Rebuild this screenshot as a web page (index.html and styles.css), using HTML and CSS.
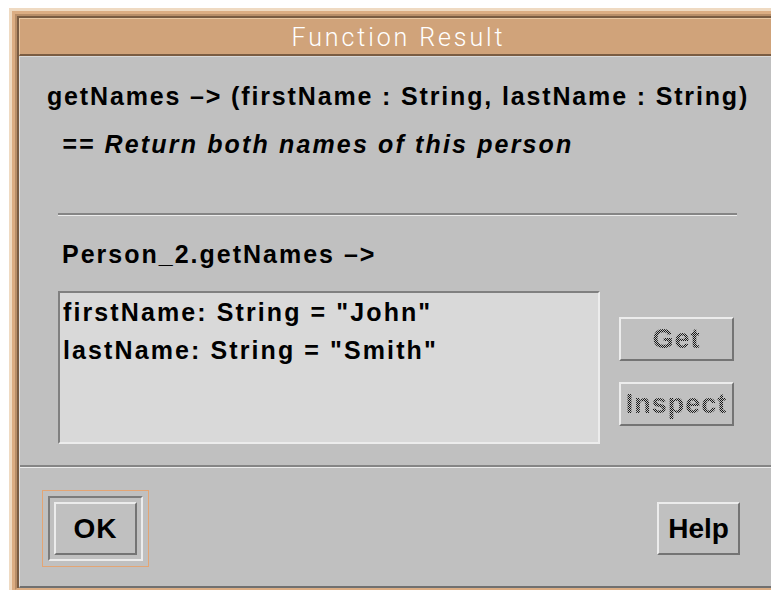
FILE: index.html
```html
<!DOCTYPE html>
<html lang="en">
<head>
<meta charset="utf-8">
<title>Function Result</title>
<link rel="stylesheet" href="styles.css">
</head>
<body>
<div class="frame">
  <div class="frame-tan">
    <div class="frame-mid">
      <div class="frame-inner">
        <div class="titlebar">Function Result</div>
        <div class="panel">
          <div class="signature">getNames –&gt; (firstName : String, lastName : String)</div>
          <div class="comment">== Return both names of this person</div>
          <div class="rule rule-short"></div>
          <div class="call">Person_2.getNames –&gt;</div>
          <div class="result">
            <div class="listbox">
              <div class="item">firstName: String = "John"</div>
              <div class="item">lastName: String = "Smith"</div>
            </div>
            <div class="side-buttons">
              <button class="btn btn-side" disabled><span class="stipple">Get</span></button>
              <button class="btn btn-side" disabled><span class="stipple">Inspect</span></button>
            </div>
          </div>
          <div class="rule rule-full"></div>
          <div class="actions">
            <div class="default-ring">
              <div class="default-well">
                <button class="btn btn-action btn-ok">OK</button>
              </div>
            </div>
            <button class="btn btn-action">Help</button>
          </div>
        </div>
      </div>
    </div>
  </div>
</div>
</body>
</html>
```

FILE: styles.css
```css
html, body {
  margin: 0;
  padding: 0;
  width: 771px;
  height: 590px;
  overflow: hidden;
  background: #ffffff;
}

/* window frame: layered tan bevels */
.frame {
  margin: 8px 0 0 9px;
  width: 780px;
  border: 3px solid #efdac2;
  border-right: none;
  border-bottom: none;
}
.frame-tan {
  border: 3px solid #dbad83;
  border-right: none;
}
.frame-mid {
  border: 2px solid #b88e68;
  border-right: none;
  border-bottom-color: #dbad83;
}
.frame-inner {
  width: 758px;
  border-top: 2px solid #7a5c42;
  border-left: 2px solid #7a5c42;
}

.titlebar {
  height: 35px;
  line-height: 38px;
  background: #d0a37a;
  border-top: 1px solid #e8c7a2;
  border-left: 1px solid #e8c7a2;
  border-bottom: 2px solid #7a5c42;
  color: #ffffff;
  text-align: center;
  font-family: Roboto, "DejaVu Sans", sans-serif;
  font-weight: 300;
  font-size: 25px;
  letter-spacing: 2.9px;
}

.panel {
  background: #c0c0c0;
  border-top: 1px solid #d9d9d9;
  border-left: 1px solid #e0e0e0;
  border-bottom: 2px solid #707070;
  font-family: "Liberation Sans", Arial, sans-serif;
  font-weight: bold;
  font-size: 25px;
  letter-spacing: 2px;
  color: #000000;
  display: flex;
  flex-direction: column;
}

.signature {
  margin: 24px 0 0 27px;
  line-height: 30px;
  letter-spacing: 1.85px;
  white-space: nowrap;
}
.comment {
  margin: 18px 0 0 42px;
  line-height: 30px;
  font-style: italic;
  letter-spacing: 2.15px;
}

/* etched separators */
.rule {
  height: 2px;
  background: #858585;
  border-bottom: 1px solid #ececec;
}
.rule-short {
  margin: 54px 0 0 38px;
  width: 679px;
}
.rule-full {
  margin-top: 21px;
}

.call {
  margin: 23px 0 0 42px;
  line-height: 30px;
}

.result {
  margin: 22px 0 0 38px;
  display: flex;
  gap: 19px;
}
.listbox {
  box-sizing: border-box;
  width: 542px;
  height: 153px;
  background: #d9d9d9;
  border: 2px solid;
  border-color: #808080 #ececec #ececec #808080;
  padding: 0 3px;
  line-height: 38px;
  letter-spacing: 2.1px;
  white-space: nowrap;
}
.side-buttons {
  padding-top: 26px;
  display: flex;
  flex-direction: column;
  gap: 21px;
}

.btn {
  box-sizing: border-box;
  margin: 0;
  padding: 0;
  background: #c0c0c0;
  border: 2px solid;
  border-color: #ececec #747474 #747474 #ececec;
  color: #000000;
  font-family: "Liberation Sans", Arial, sans-serif;
  font-weight: bold;
  font-size: 28px;
  letter-spacing: 0;
}
.btn-side {
  width: 115px;
  height: 44px;
  font-size: 27px;
  letter-spacing: 1px;
}
/* insensitive label drawn with a 50% stipple */
.stipple {
  color: transparent;
  background-image: repeating-conic-gradient(#161616 0 25%, transparent 0 50%);
  background-size: 2px 2px;
  -webkit-background-clip: text;
  background-clip: text;
}

.actions {
  margin: 22px 0 19px 22px;
  width: 698px;
  display: flex;
  justify-content: space-between;
  align-items: center;
}
.default-ring {
  border: 1px solid #e3a574;
  padding: 5px;
}
.default-well {
  border: 2px solid;
  border-color: #7c7c7c #ececec #ececec #7c7c7c;
  padding: 4px;
}
.btn-action {
  width: 83px;
  height: 53px;
  display: block;
}
.btn-ok {
  letter-spacing: 1px;
}
```
